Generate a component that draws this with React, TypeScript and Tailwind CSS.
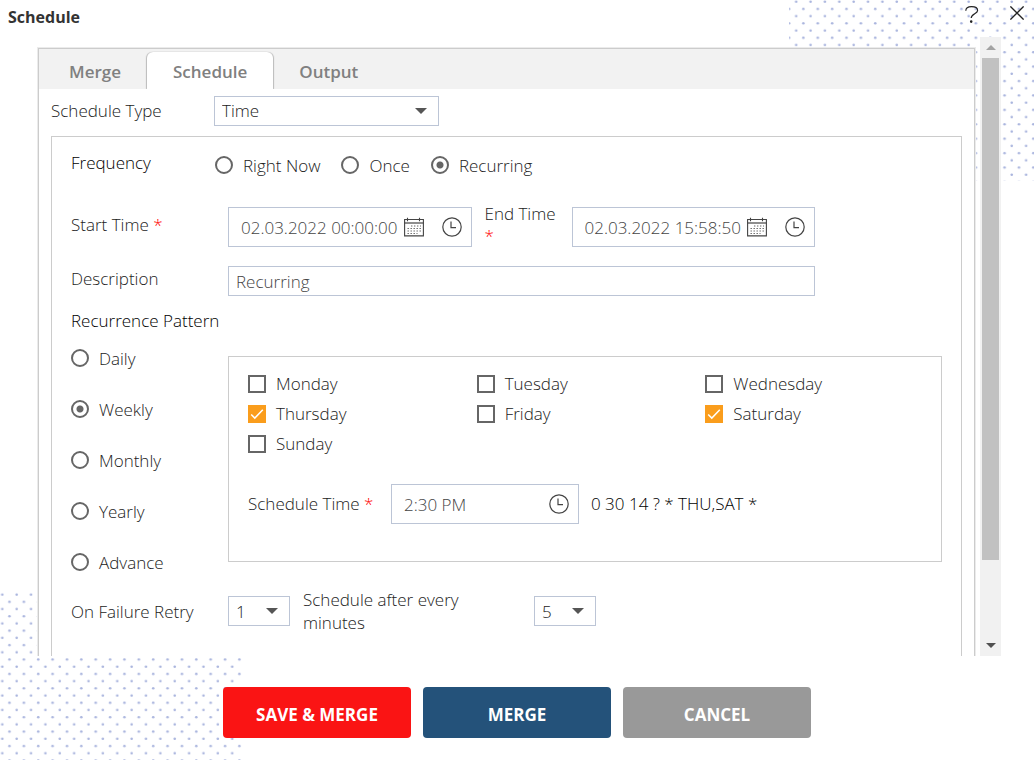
import { useState } from "react";
import type { ReactNode } from "react";

const DAYS = ["Monday", "Tuesday", "Wednesday", "Thursday", "Friday", "Saturday", "Sunday"];
const TABS = ["Merge", "Schedule", "Output"];

/* Dotted backdrop in the corners of the dialog */
function Dots({ id, x, y, className }: { id: string; x: number; y: number; className: string }) {
    return (
        <svg aria-hidden="true" className={`absolute -z-10 ${className}`}>
            <pattern id={id} x={x} y={y} width="14.37" height="14.42" patternUnits="userSpaceOnUse">
                <circle cx="3.6" cy="3.6" r="1.3" fill="#aab5de" />
                <circle cx="10.8" cy="10.8" r="1.3" fill="#aab5de" />
            </pattern>
            <rect width="100%" height="100%" fill={`url(#${id})`} />
        </svg>
    );
}

function CalendarIcon() {
    return (
        <svg viewBox="0 0 20 20" className="h-5 w-5" fill="none" stroke="#444">
            <path d="M.6 2.5h18.8v16.4H.6z" strokeWidth="1.1" />
            <path d="M.6 6h18.8" strokeWidth="1.2" />
            <path d="M3.5 .8v3.4M15.5 .8v3.4" strokeWidth="1.1" />
            <path d="M7 9h10M3.5 11.5h13.5M3.5 14h13.5M3.5 16.5h10" stroke="#666" strokeWidth="1" strokeDasharray="1.4 1.6" />
        </svg>
    );
}

function ClockIcon() {
    return (
        <svg viewBox="0 0 20 20" className="h-5 w-5" fill="none" stroke="#444" strokeWidth="1.2">
            <circle cx="10" cy="10" r="9.2" />
            <path d="M9 4.5v6.2h5" />
        </svg>
    );
}

function Radio({ name, label, checked, onChange }: { name: string; label: string; checked: boolean; onChange: () => void }) {
    return (
        <label className="flex h-[26px] items-start leading-6">
            <input
                type="radio"
                name={name}
                checked={checked}
                onChange={onChange}
                className="mt-[2px] mr-[10px] h-[18px] w-[18px] shrink-0 appearance-none rounded-full border-2 border-[#666] checked:bg-[radial-gradient(circle,#666_0_3px,transparent_4px)]"
            />
            {label}
        </label>
    );
}

function DayCheckbox({ label, checked, onChange }: { label: string; checked: boolean; onChange: () => void }) {
    return (
        <label className="flex h-[30px] items-center">
            <span className="relative mr-[10px] h-[18px] w-[18px]">
                <input
                    type="checkbox"
                    checked={checked}
                    onChange={onChange}
                    className="peer block h-[18px] w-[18px] appearance-none border-2 border-[#666] checked:border-[#fa9d1c] checked:bg-[#fa9d1c]"
                />
                <svg viewBox="0 0 18 18" className="pointer-events-none invisible absolute inset-0 peer-checked:visible" fill="none" stroke="#fff" strokeWidth="1.5">
                    <path d="M3.2 9.4l3.6 3.7 8-8.4" />
                </svg>
            </span>
            {label}
        </label>
    );
}

function Select({ id, options, className }: { id: string; options: string[]; className: string }) {
    return (
        <span className={`relative block ${className}`}>
            <select id={id} className="block h-[30px] w-full appearance-none border border-[#bcc5d6] bg-white pl-[7px] text-[#222]">
                {options.map((o) => <option key={o}>{o}</option>)}
            </select>
            <svg viewBox="0 0 12 6" className="pointer-events-none absolute top-3 right-3 h-[6px] w-3" fill="#555">
                <path d="M0 0h12L6 6z" />
            </svg>
        </span>
    );
}

function DateField({ id, value, calendar, className }: { id: string; value: string; calendar?: boolean; className: string }) {
    return (
        <div className={`flex h-10 items-center border border-[#bcc5d6] bg-white pr-[9px] ${className}`}>
            <input id={id} defaultValue={value} className="h-full min-w-0 flex-1 pl-3 text-[#444] outline-none" />
            {calendar && <button aria-label="Pick a date" className="mr-[18px]"><CalendarIcon /></button>}
            <button aria-label="Pick a time"><ClockIcon /></button>
        </div>
    );
}

function Required({ children }: { children: ReactNode }) {
    return <>{children} <span className="text-[#ff0000]">*</span></>;
}

export default function App() {
    const [tab, setTab] = useState("Schedule");
    const [frequency, setFrequency] = useState("Recurring");
    const [pattern, setPattern] = useState("Weekly");
    const [days, setDays] = useState(["Thursday", "Saturday"]);

    const toggleDay = (day: string) =>
        setDays(days.includes(day) ? days.filter((d) => d !== day) : [...days, day]);

    return (
        <div className="relative isolate flex h-screen flex-col overflow-hidden bg-white font-['Open_Sans','Noto_Sans',sans-serif] text-[17px] font-light text-[#222]">
            <Dots id="dots-top" x={3.6} y={-1.9} className="top-0 right-0 h-[181px] w-[245px]" />
            <Dots id="dots-bottom" x={-1.3} y={0} className="bottom-0 left-0 h-[169px] w-[243px]" />

            <header className="flex h-[37px] shrink-0 items-start justify-between pr-[10px] pl-2">
                <h1 className="text-base leading-[35px] font-bold text-[#333]">Schedule</h1>
                <div className="flex gap-[31px] pt-[6px]">
                    <button aria-label="Help">
                        <svg viewBox="0 0 14 18" className="h-[18px] w-[14px]" fill="none" stroke="#222" strokeWidth="1.2">
                            <path d="M.8 4.8C.8 2 2.6.7 6.6.7s6 1.3 6 3.8c0 3.4-6.4 3.2-6.4 7.6" />
                            <circle cx="6.2" cy="15.6" r=".7" fill="#222" />
                        </svg>
                    </button>
                    <button aria-label="Close">
                        <svg viewBox="0 0 14 14" className="mb-1 h-[14px] w-[14px]" stroke="#222" strokeWidth="1.3">
                            <path d="M.4.4l13.2 13.2M13.6.4L.4 13.6" />
                        </svg>
                    </button>
                </div>
            </header>

            <main className="flex min-h-0 flex-1 gap-[5px] overflow-hidden pr-[33px] pl-[38px]">
                <div className="mt-[11px] h-max min-w-0 flex-1 border border-[#ccc] bg-white shadow-[0_0_0_1px_#ebebeb]">
                    <div role="tablist" className="flex h-10 items-end bg-[#f2f2f2] pl-1">
                        {TABS.map((t) => (
                            <button
                                key={t}
                                role="tab"
                                aria-selected={tab === t}
                                onClick={() => setTab(t)}
                                className="h-[37px] rounded-t-md px-[26px] pt-[3px] font-semibold text-[#808080] aria-selected:bg-white aria-selected:shadow-[-1px_0_1px_#bbb,1px_0_1px_#bbb] [clip-path:inset(-2px_-2px_0)]"
                            >
                                {t}
                            </button>
                        ))}
                    </div>

                    <div className="px-3 pt-[7px]">
                        <div className="flex h-[30px] items-center">
                            <label htmlFor="type" className="w-[163px]">Schedule Type</label>
                            <Select id="type" options={["Time", "Event"]} className="w-[225px]" />
                        </div>

                        <div className="mt-[10px] border border-[#ccc] pt-[13px] pr-[19px] pb-10 pl-[19px]">
                            <div className="flex h-[30px] items-start">
                                <span className="w-[144px] leading-[26px] text-black">Frequency</span>
                                <div className="flex gap-[21px] pt-1">
                                    {["Right Now", "Once", "Recurring"].map((f) => (
                                        <Radio key={f} name="frequency" label={f} checked={frequency === f} onChange={() => setFrequency(f)} />
                                    ))}
                                </div>
                            </div>

                            <div className="mt-[23px] flex items-start pr-[127px]">
                                <label htmlFor="start" className="w-[157px] shrink-0 leading-[44px]"><Required>Start Time</Required></label>
                                <DateField id="start" value="02.03.2022 00:00:00" calendar className="mt-1 min-w-0 flex-1" />
                                <label htmlFor="end" className="mx-[13px] w-[74px] shrink-0 leading-[22px]"><Required>End Time</Required></label>
                                <DateField id="end" value="02.03.2022 15:58:50" calendar className="mt-1 min-w-0 flex-1" />
                            </div>

                            <div className="mt-[19px] flex items-start pr-[127px]">
                                <label htmlFor="description" className="w-[157px] shrink-0 leading-[26px]">Description</label>
                                <input id="description" defaultValue="Recurring" className="h-[30px] min-w-0 flex-1 border border-[#bcc5d6] bg-white pl-[7px] text-[#444]" />
                            </div>

                            <h2 className="mt-3 leading-[26px] text-black">Recurrence Pattern</h2>

                            <div className="mt-[13px] flex items-start">
                                <div className="flex w-[157px] shrink-0 flex-col gap-[25px]">
                                    {["Daily", "Weekly", "Monthly", "Yearly", "Advance"].map((p) => (
                                        <Radio key={p} name="pattern" label={p} checked={pattern === p} onChange={() => setPattern(p)} />
                                    ))}
                                </div>
                                <div className="mt-[9px] min-w-0 flex-1 border border-[#ccc] pt-3 pr-[7px] pb-[37px] pl-[19px]">
                                    <div className="grid grid-cols-3">
                                        {DAYS.map((d) => (
                                            <DayCheckbox key={d} label={d} checked={days.includes(d)} onChange={() => toggleDay(d)} />
                                        ))}
                                    </div>
                                    <div className="mt-[25px] flex items-center">
                                        <label htmlFor="time" className="w-[143px]"><Required>Schedule Time</Required></label>
                                        <DateField id="time" value="2:30 PM" className="w-[188px]" />
                                        <span className="ml-3 text-black">0 30 14 ? * THU,SAT *</span>
                                    </div>
                                </div>
                            </div>

                            <div className="mt-[11px] flex items-center leading-[23px]">
                                <label htmlFor="retry" className="w-[157px]">On Failure Retry</label>
                                <Select id="retry" options={["1", "2", "3"]} className="w-[62px]" />
                                <label htmlFor="interval" className="mx-[13px] w-[218px]">Schedule after every<br />minutes</label>
                                <Select id="interval" options={["5", "10", "15"]} className="w-[62px]" />
                            </div>
                        </div>
                    </div>
                </div>

                {/* Scrollbar */}
                <div className="flex w-[21px] shrink-0 flex-col bg-[#f1f1f1]">
                    <button aria-label="Scroll up" className="flex h-[21px] items-center justify-center">
                        <svg viewBox="0 0 10 5" className="h-[5px] w-[10px]" fill="#a3a3a3"><path d="M0 5h10L5 0z" /></svg>
                    </button>
                    <div className="flex flex-1 flex-col px-[2px]">
                        <div className="h-[87%] bg-[#c1c1c1]" />
                    </div>
                    <button aria-label="Scroll down" className="flex h-[21px] items-center justify-center">
                        <svg viewBox="0 0 10 5" className="h-[5px] w-[10px]" fill="#505050"><path d="M0 0h10L5 5z" /></svg>
                    </button>
                </div>
            </main>

            <footer className="flex shrink-0 justify-center gap-3 pt-[31px] pb-[22px] text-[17px] font-bold text-white">
                <button className="h-[51px] w-[188px] rounded-sm bg-[#fa1414] pt-1">SAVE &amp; MERGE</button>
                <button className="h-[51px] w-[188px] rounded-sm bg-[#24527a] pt-1">MERGE</button>
                <button className="h-[51px] w-[188px] rounded-sm bg-[#999] pt-1">CANCEL</button>
            </footer>
        </div>
    );
}
